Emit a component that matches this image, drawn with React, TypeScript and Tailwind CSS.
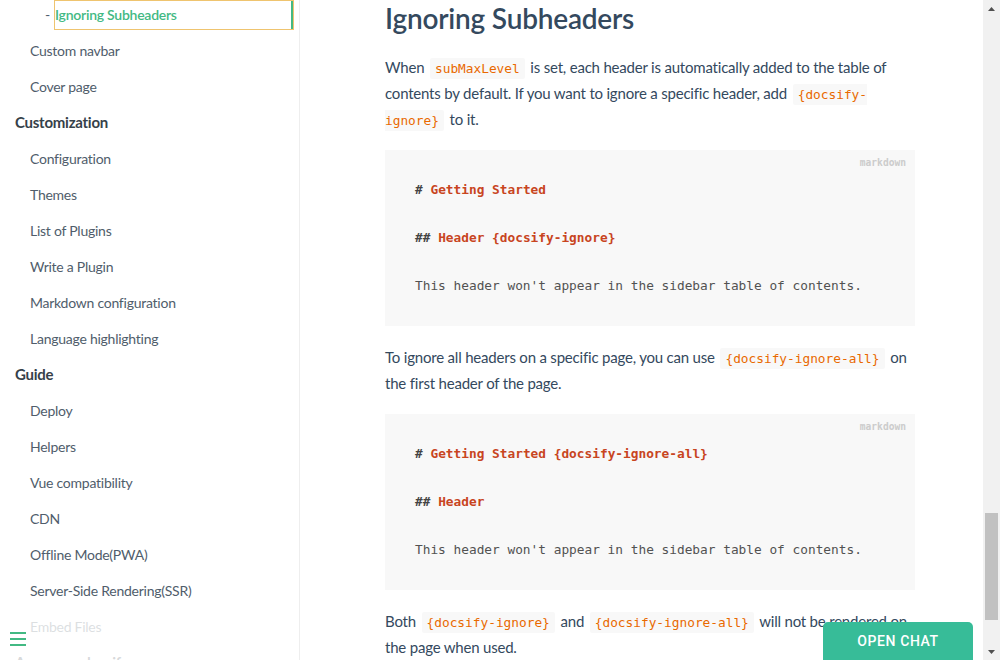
import type React from "react";

const sans = "font-['Lato','Liberation_Sans',sans-serif]";
const mono = "font-['DejaVu_Sans_Mono','Liberation_Mono',monospace]";

type NavItem = { label: string; kind: "link" | "head" };

const navItems: NavItem[] = [
	{ label: "Custom navbar", kind: "link" },
	{ label: "Cover page", kind: "link" },
	{ label: "Customization", kind: "head" },
	{ label: "Configuration", kind: "link" },
	{ label: "Themes", kind: "link" },
	{ label: "List of Plugins", kind: "link" },
	{ label: "Write a Plugin", kind: "link" },
	{ label: "Markdown configuration", kind: "link" },
	{ label: "Language highlighting", kind: "link" },
	{ label: "Guide", kind: "head" },
	{ label: "Deploy", kind: "link" },
	{ label: "Helpers", kind: "link" },
	{ label: "Vue compatibility", kind: "link" },
	{ label: "CDN", kind: "link" },
	{ label: "Offline Mode(PWA)", kind: "link" },
	{ label: "Server-Side Rendering(SSR)", kind: "link" },
	{ label: "Embed Files", kind: "link" },
	{ label: "Awesome docsify", kind: "head" },
];

const Code: React.FC<{ children: React.ReactNode }> = ({ children }) => (
	<code
		className={`${mono} text-[12.8px] leading-[1] tracking-normal text-[#e96900] bg-[#f8f8f8] px-[5px] py-[3px] mx-[2px] rounded-[2px]`}
	>
		{children}
	</code>
);

const CodeBlock: React.FC<{ lines: React.ReactNode[] }> = ({ lines }) => (
	<div className="relative bg-[#f8f8f8] w-[530px] px-[30px] py-[28px]">
		<span
			className={`${mono} absolute top-[5px] right-[9px] text-[9.6px] font-semibold text-[#ccc] leading-[15px]`}
		>
			markdown
		</span>
		<div className={`${mono} text-[12.8px] leading-[24px] text-[#525252] whitespace-pre`}>
			{lines.map((l, i) => (
				<div key={i} className="h-[24px]">
					{l}
				</div>
			))}
		</div>
	</div>
);

const Title: React.FC<{ hash: string; text: string }> = ({ hash, text }) => (
	<>
		<span className="font-bold text-[#444]">{hash} </span>
		<span className="font-bold text-[#c8451f]">{text}</span>
	</>
);

const Sidebar: React.FC = () => (
	<aside
		className={`${sans} w-[300px] shrink-0 border-r border-[#eee] h-full overflow-hidden text-[14px] tracking-[-0.25px]`}
	>
		<div className="flex flex-col gap-[6px]">
			{/* active sub header */}
			<div className="h-[30px] flex pl-[45px] pr-[5px]">
				<span className="w-[9px] text-[#505d6b] flex items-center pb-[1px]">-</span>
				<div className="flex-1 flex border border-[#efc46f]">
					<span className="flex-1 flex items-center pb-[1px] font-semibold text-[#42b983]">
						Ignoring Subheaders
					</span>
					<span className="w-[2px] bg-[#42b983]" />
				</div>
			</div>
			{navItems.map((item) =>
				item.kind === "head" ? (
					<div
						key={item.label}
						className="h-[30px] flex items-center pb-[2px] pl-[15px] font-bold text-[15px] text-[#364149]"
					>
						{item.label}
					</div>
				) : (
					<div
						key={item.label}
						className="h-[30px] flex items-center pb-[2px] pl-[30px] text-[#505d6b]"
					>
						{item.label}
					</div>
				),
			)}
		</div>
	</aside>
);

const Scrollbar: React.FC = () => (
	<div className="w-[17px] shrink-0 h-full bg-[#f1f1f1] flex flex-col">
		<div className="h-[17px] flex items-center justify-center">
			<svg width="7" height="4" viewBox="0 0 7 4">
				<path d="M0 4 L3.5 0 L7 4 Z" fill="#505050" />
			</svg>
		</div>
		<div className="flex-1 pt-[496px] px-[2px]">
			<div className="h-[107px] bg-[#c1c1c1]" />
		</div>
		<div className="h-[17px] flex items-center justify-center">
			<svg width="7" height="4" viewBox="0 0 7 4">
				<path d="M0 0 L3.5 4 L7 0 Z" fill="#505050" />
			</svg>
		</div>
	</div>
);

export default function App() {
	return (
		<div className="relative w-[1000px] h-[660px] flex overflow-hidden bg-white">
			<Sidebar />

			<main className={`${sans} flex-1 h-full overflow-hidden pl-[85px] text-[#34495e]`}>
				<div className="flex flex-col gap-[18px] w-[530px]">
					<h2 className="text-[28px] leading-[36px] font-semibold tracking-[-0.2px] text-[#34495e]">
						Ignoring Subheaders
					</h2>
					<p className="text-[15px] leading-[26px] tracking-[-0.2px] whitespace-nowrap">
						When <Code>subMaxLevel</Code> is set, each header is automatically added to the table of
						<br />
						contents by default. If you want to ignore a specific header, add{" "}
						<Code>
							{"{docsify-"}
							<br />
							{"ignore}"}
						</Code>{" "}
						to it.
					</p>
					<CodeBlock
						lines={[
							<Title key="a" hash="#" text="Getting Started" />,
							"",
							<Title key="b" hash="##" text="Header {docsify-ignore}" />,
							"",
							"This header won't appear in the sidebar table of contents.",
						]}
					/>
					<p className="text-[15px] leading-[26px] tracking-[-0.2px] whitespace-nowrap">
						To ignore all headers on a specific page, you can use <Code>{"{docsify-ignore-all}"}</Code> on
						<br />
						the first header of the page.
					</p>
					<CodeBlock
						lines={[
							<Title key="a" hash="#" text="Getting Started {docsify-ignore-all}" />,
							"",
							<Title key="b" hash="##" text="Header" />,
							"",
							"This header won't appear in the sidebar table of contents.",
						]}
					/>
					<p className="text-[15px] leading-[26px] tracking-[-0.2px] whitespace-nowrap">
						Both <Code>{"{docsify-ignore}"}</Code> and <Code>{"{docsify-ignore-all}"}</Code> will not be rendered on
						<br />
						the page when used.
					</p>
				</div>
			</main>

			<Scrollbar />

			{/* sidebar toggle */}
			<div className="absolute left-0 bottom-0 w-[284px] h-[38px] bg-white/80 p-[10px]">
				<div className="flex flex-col gap-[4px] w-[16px]">
					<span className="block h-[2px] bg-[#42b983]" />
					<span className="block h-[2px] bg-[#42b983]" />
					<span className="block h-[2px] bg-[#42b983]" />
				</div>
			</div>

			{/* chat button */}
			<div className="absolute left-[823px] top-[622px] w-[150px] h-[40px] rounded-t-[5px] bg-[#37bc98] flex items-start justify-center pt-[9px]">
				<span className="font-['Roboto',sans-serif] text-[14px] font-medium tracking-[0.6px] text-white">
					OPEN CHAT
				</span>
			</div>
		</div>
	);
}
